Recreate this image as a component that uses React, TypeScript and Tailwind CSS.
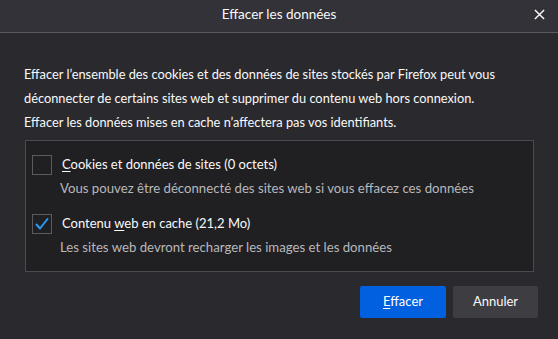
import React from "react";

function CheckIcon() {
  return (
    <svg viewBox="0 0 20 20" className="h-[20px] w-[20px]">
      <path d="M4.5 10.5 L8 14.5 L15.5 5" fill="none" stroke="#2a9af3" strokeWidth="2" strokeLinecap="round" strokeLinejoin="round" />
    </svg>
  );
}

export default function App() {
  return (
    <div className="flex h-[339px] w-[558px] flex-col bg-[#2a2a2e] text-[#f9f9fa]" style={{ fontFamily: 'Lato, "Noto Sans", sans-serif' }}>
      <div className="relative flex h-[33px] items-center justify-center border-b border-[#5a5a60] bg-[#323238] pb-[3px]">
        <span className="text-[13.5px]">Effacer les données</span>
        <button className="absolute right-[8px] top-[3px] flex h-[22px] w-[22px] items-center justify-center">
          <svg viewBox="0 0 12 12" className="h-[11px] w-[11px]">
            <path d="M1 1 L11 11 M11 1 L1 11" stroke="#f9f9fa" strokeWidth="1.6" />
          </svg>
        </button>
      </div>
      <div className="flex flex-col px-[24px] pt-[29px]">
        <p className="text-[12.8px] leading-[24px]">
          Effacer l’ensemble des cookies et des données de sites stockés par Firefox peut vous déconnecter de certains sites web et supprimer du contenu web hors connexion.
        </p>
        <p className="text-[12.8px] leading-[24px]">Effacer les données mises en cache n’affectera pas vos identifiants.</p>
        <div className="mt-[6px] ml-[1px] flex w-[509px] flex-col gap-[17px] border border-[#4a4a50] bg-[#202023] px-[6px] pb-[15px] pt-[14px]">
          <div className="flex flex-col">
            <div className="flex h-[20px] items-center gap-[10px]">
              <span className="h-[20px] w-[20px] border border-[#5a5a60]" />
              <span className="text-[13px]">
                <span className="underline underline-offset-2">C</span>ookies et données de sites (0 octets)
              </span>
            </div>
            <span className="ml-[28px] mt-[4px] h-[18px] text-[13.2px] leading-[18px] text-[#b8b8bb]">Vous pouvez être déconnecté des sites web si vous effacez ces données</span>
          </div>
          <div className="flex flex-col">
            <div className="flex h-[20px] items-center gap-[10px]">
              <span className="h-[20px] w-[20px] border border-[#5a5a60]">
                <span className="-m-px block"><CheckIcon /></span>
              </span>
              <span className="text-[13px]">
                Contenu <span className="underline underline-offset-2">w</span>eb en cache (21,2 Mo)
              </span>
            </div>
            <span className="ml-[28px] mt-[4px] h-[18px] text-[13.2px] leading-[18px] text-[#b8b8bb]">Les sites web devront recharger les images et les données</span>
          </div>
        </div>
        <div className="mt-[14px] flex justify-end gap-[7px]">
          <button className="h-[32px] w-[86px] rounded-[2px] bg-[#0060df] text-[13px] text-white">
            <span className="underline underline-offset-2">E</span>ffacer
          </button>
          <button className="mr-[-4px] h-[32px] w-[85px] rounded-[2px] bg-[#3d3d42] text-[13px] text-[#f9f9fa]">Annuler</button>
        </div>
      </div>
    </div>
  );
}
